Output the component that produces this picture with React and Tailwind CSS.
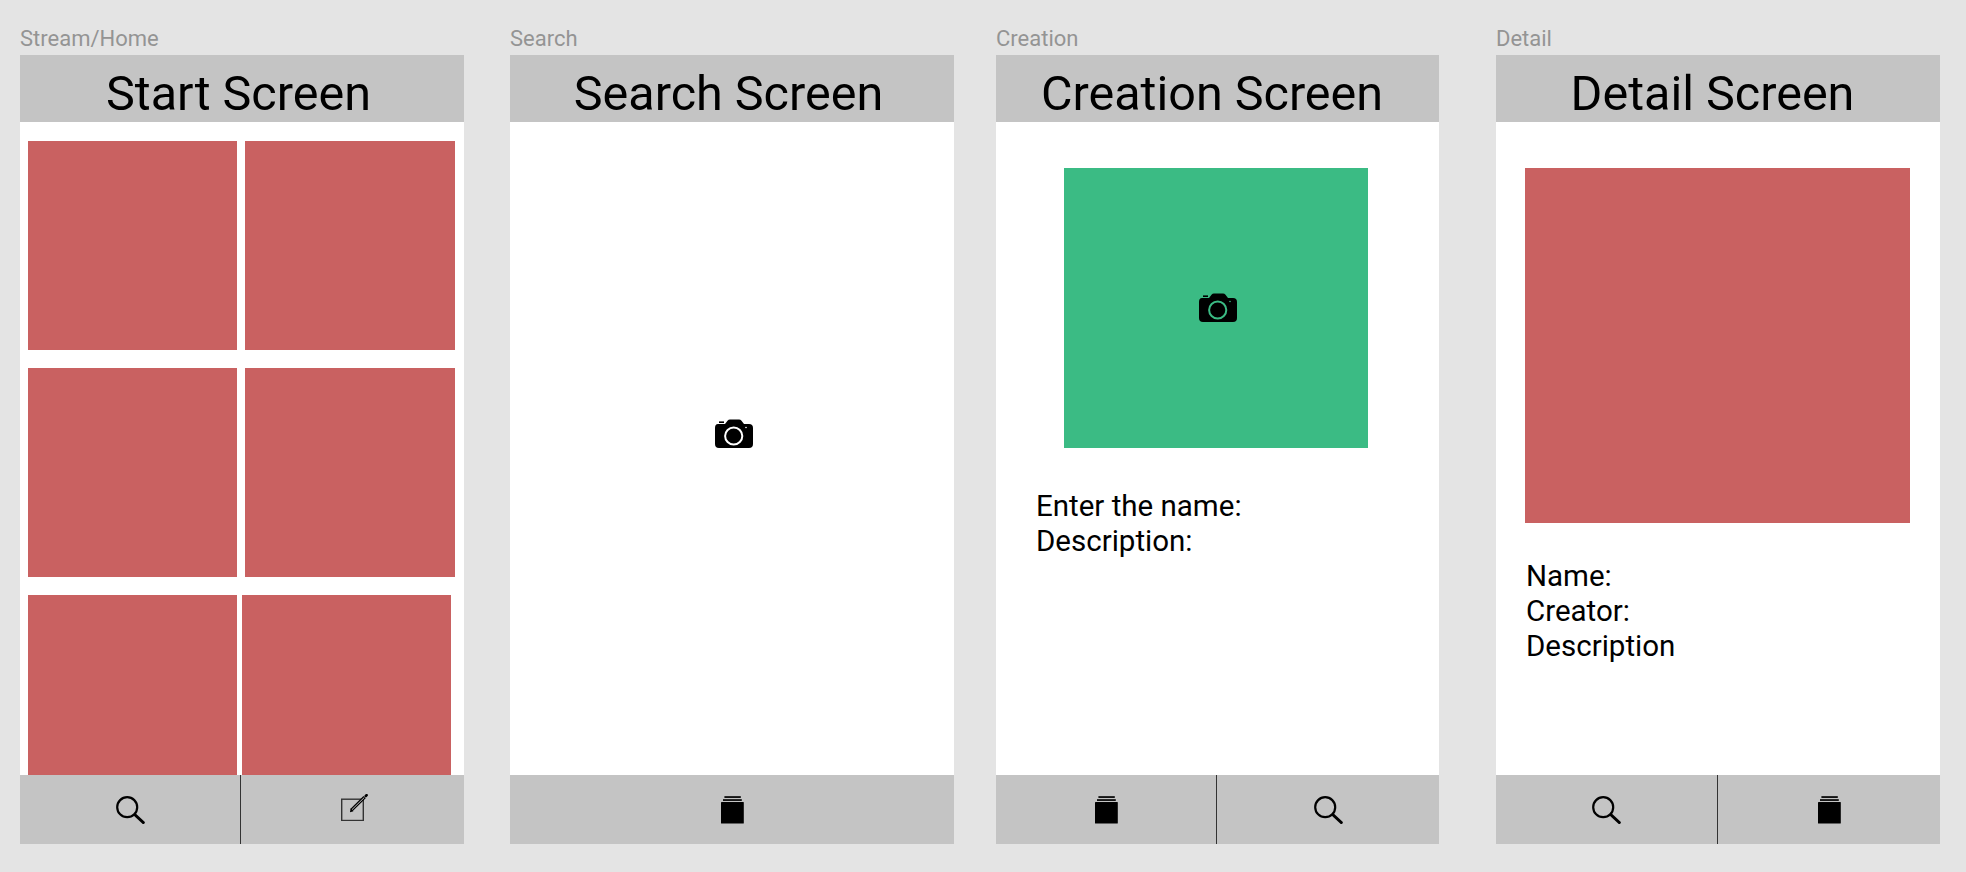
import React from 'react';

const SearchIcon = () => (
  <svg width="29" height="28" viewBox="0 0 29 28" fill="none" stroke="black">
    <circle cx="11.2" cy="11.2" r="10" strokeWidth="2.2" />
    <path d="M18.8 18.6 L27.4 26.6" strokeWidth="2.8" strokeLinecap="round" />
  </svg>
);

const EditIcon = () => (
  <svg width="27" height="27" viewBox="0 0 27 27" fill="none" className="mb-[4px] ml-[4px]">
    <rect x="0.7" y="5.2" width="21.6" height="21.3" stroke="#333" strokeWidth="1.4" />
    <path d="M10.4 16.2 L23.6 3.2" stroke="black" strokeWidth="3.2" />
    <path d="M10.8 15.8 L23.2 3.6" stroke="#c4c4c4" strokeWidth="1" />
    <path d="M9 18.2 L9.6 14.6 L12.4 17.2 Z" fill="black" />
    <path d="M24.8 2 L25.6 1.2" stroke="black" strokeWidth="2.6" strokeLinecap="round" />
  </svg>
);

const StackIcon = () => (
  <svg width="23" height="28" viewBox="0 0 23 28" fill="black">
    <rect x="3.4" y="0.2" width="16.4" height="1.7" />
    <rect x="2" y="3.2" width="18.8" height="1.7" />
    <rect x="0" y="6" width="22.8" height="21.6" rx="0.6" />
  </svg>
);

const CameraIcon = ({ ring }) => (
  <svg width="40" height="30" viewBox="0 0 40 30">
    <path
      d="M4 5 H11 L13.5 1.8 Q14.5 0.5 16 0.5 H25 Q26.5 0.5 27.5 1.8 L30 5 H35 Q39 5 39 9 V25 Q39 29 35 29 H5 Q1 29 1 25 V9 Q1 5 4 5 Z"
      fill="black"
    />
    <rect x="5" y="2.4" width="5" height="1.6" fill="black" />
    <circle cx="19.7" cy="17" r="8.6" fill="black" stroke={ring} strokeWidth="2" />
    <circle cx="32" cy="8.5" r="0.8" fill={ring} />
  </svg>
);

const Footer = ({ left, right, split, cell = 'w-[221px]' }) => (
  <div className="flex h-[69px] shrink-0 items-center bg-[#c4c4c4]">
    {split ? (
      <>
        <div className={`flex h-full items-center justify-center border-r border-[#333] ${cell}`}>{left}</div>
        <div className="flex h-full flex-1 items-center justify-center">{right}</div>
      </>
    ) : (
      <div className="flex h-full flex-1 items-center justify-center pl-[1px]">{left}</div>
    )}
  </div>
);

const Screen = ({ label, title, className, titleClass, children, footer }) => (
  <div className={`flex shrink-0 flex-col ${className}`}>
    <div className="-mt-[3px] mb-[3px] h-[27px] text-[22px] leading-[27px] text-[#949494]">{label}</div>
    <div className={`flex h-[67px] shrink-0 items-center justify-center bg-[#c4c4c4] pt-[11px] text-[48.5px] leading-none text-black ${titleClass}`}>
      {title}
    </div>
    <div className="min-h-0 flex-1 overflow-hidden bg-white">{children}</div>
    {footer}
  </div>
);

const Tile = ({ className = 'w-[209px]' }) => <div className={`h-[209px] shrink-0 bg-[#c96161] ${className}`} />;

export default function App() {
  return (
    <div className="flex h-[872px] items-stretch overflow-hidden bg-[#e4e4e4] pt-[28px] pb-[28px] pl-[20px] font-['Roboto',sans-serif]">
      <Screen label="Stream/Home" title="Start Screen" className="w-[444px]" titleClass="pr-[7px]" footer={<Footer split left={<SearchIcon />} right={<EditIcon />} />}>
        <div className="flex flex-col gap-[18px] pt-[19px] pl-[8px]">
          <div className="flex gap-[8px]">
            <Tile />
            <Tile className="w-[210px]" />
          </div>
          <div className="flex gap-[8px]">
            <Tile />
            <Tile className="w-[210px]" />
          </div>
          <div className="flex gap-[5px]">
            <Tile />
            <Tile />
          </div>
        </div>
      </Screen>

      <Screen label="Search" title="Search Screen" className="ml-[46px] w-[444px]" titleClass="pr-[7px]" footer={<Footer left={<StackIcon />} />}>
        <div className="flex h-full items-center justify-center pb-[29px] pl-[4px]">
          <CameraIcon ring="white" />
        </div>
      </Screen>

      <Screen label="Creation" title="Creation Screen" className="ml-[42px] w-[443px]" titleClass="pr-[11px]" footer={<Footer split left={<StackIcon />} right={<SearchIcon />} />}>
        <div className="pt-[46px]">
          <div className="ml-[68px] flex h-[280px] w-[304px] items-center justify-center bg-[#3bbb84] pl-[4px]">
            <CameraIcon ring="#3bbb84" />
          </div>
          <div className="mt-[41px] ml-[40px] text-[29.5px] leading-[34.5px] text-black">
            <div>Enter the name:</div>
            <div>Description:</div>
          </div>
        </div>
      </Screen>

      <Screen label="Detail" title="Detail Screen" className="ml-[57px] w-[444px]" titleClass="pr-[11px]" footer={<Footer split cell="w-[222px]" left={<SearchIcon />} right={<StackIcon />} />}>
        <div className="pt-[46px]">
          <div className="ml-[29px] h-[355px] w-[385px] bg-[#c96161]" />
          <div className="mt-[36px] ml-[30px] text-[29.5px] leading-[34.8px] text-black">
            <div>Name:</div>
            <div>Creator:</div>
            <div>Description</div>
          </div>
        </div>
      </Screen>
    </div>
  );
}
